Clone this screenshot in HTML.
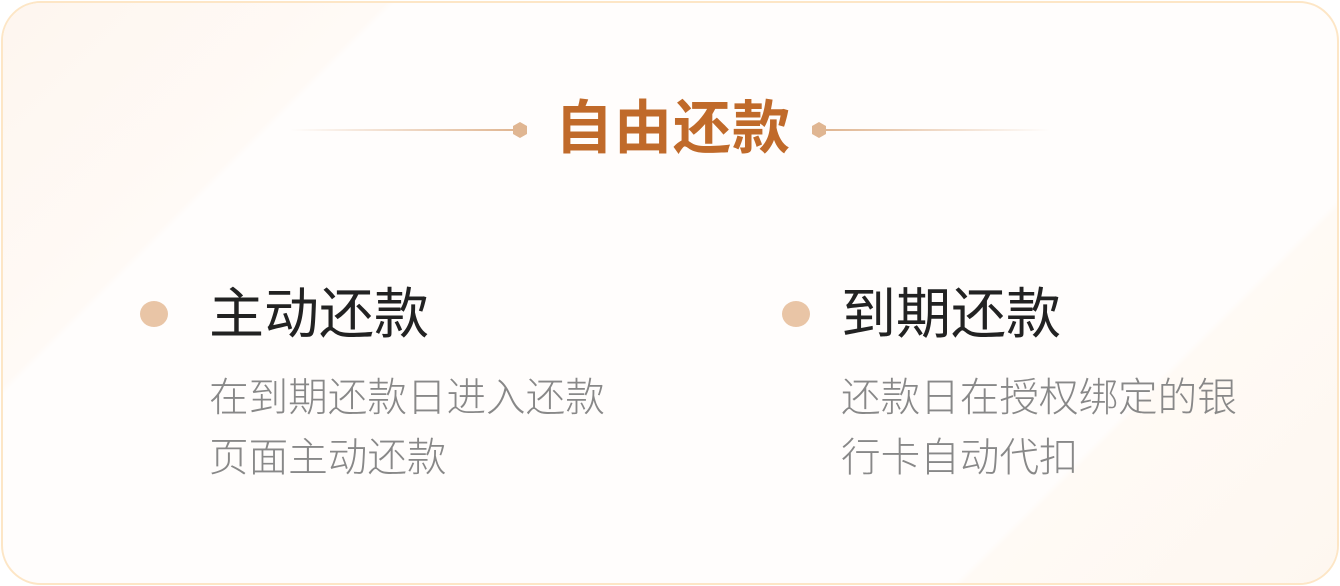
<!DOCTYPE html>
<html><head><meta charset="utf-8"><style>
html,body{margin:0;padding:0;background:#fff;}
body{width:1340px;height:586px;position:relative;overflow:hidden;font-family:"Liberation Sans","Noto Sans CJK SC",sans-serif;}
.card{position:absolute;left:1px;top:1px;width:1334px;height:580px;border:2px solid #fde6c6;border-radius:40px;background:#fffdfc;overflow:hidden;}
.tri1{position:absolute;left:0;top:0;width:1334px;height:580px;background:linear-gradient(135deg,#fef6ef 0%,#fffaf6 20%,rgba(255,255,255,0) 20.5%);}
.tri2{position:absolute;left:0;top:0;width:1334px;height:580px;background:linear-gradient(135deg,rgba(255,255,255,0) 80%,#fffaf5 80.5%,#fef7f0 100%);}
.t{position:absolute;white-space:nowrap;line-height:1;}
.title{left:555px;top:100px;font-size:58px;color:#c06a2a;font-weight:bold;letter-spacing:1px;}
.h{font-size:55px;color:#222;top:287px;}
.p{font-size:39.6px;color:#888;line-height:60px;font-weight:300;}
.dot{position:absolute;width:28px;height:26px;border-radius:50%;background:#e9c5a6;}
.line{position:absolute;height:2px;top:129px;}
.hex{position:absolute;width:14px;height:16px;background:#e0b692;clip-path:polygon(50% 0,100% 25%,100% 75%,50% 100%,0 75%,0 25%);top:122px;}
</style></head><body>
<div class="card"><div class="tri1"></div><div class="tri2"></div></div>
<div class="line" style="left:290px;width:224px;background:linear-gradient(90deg,rgba(224,182,146,0),#e0b692);"></div>
<div class="hex" style="left:513px"></div>
<div class="hex" style="left:812px"></div>
<div class="line" style="left:825px;width:225px;background:linear-gradient(90deg,#e0b692,rgba(224,182,146,0));"></div>
<div class="t title">自由还款</div>
<div class="dot" style="left:140px;top:301px"></div>
<div class="t h" style="left:209px">主动还款</div>
<div class="t p" style="left:209px;top:368px">在到期还款日进入还款<br>页面主动还款</div>
<div class="dot" style="left:782px;top:301px"></div>
<div class="t h" style="left:841px">到期还款</div>
<div class="t p" style="left:841px;top:368px">还款日在授权绑定的银<br>行卡自动代扣</div>
</body></html>
